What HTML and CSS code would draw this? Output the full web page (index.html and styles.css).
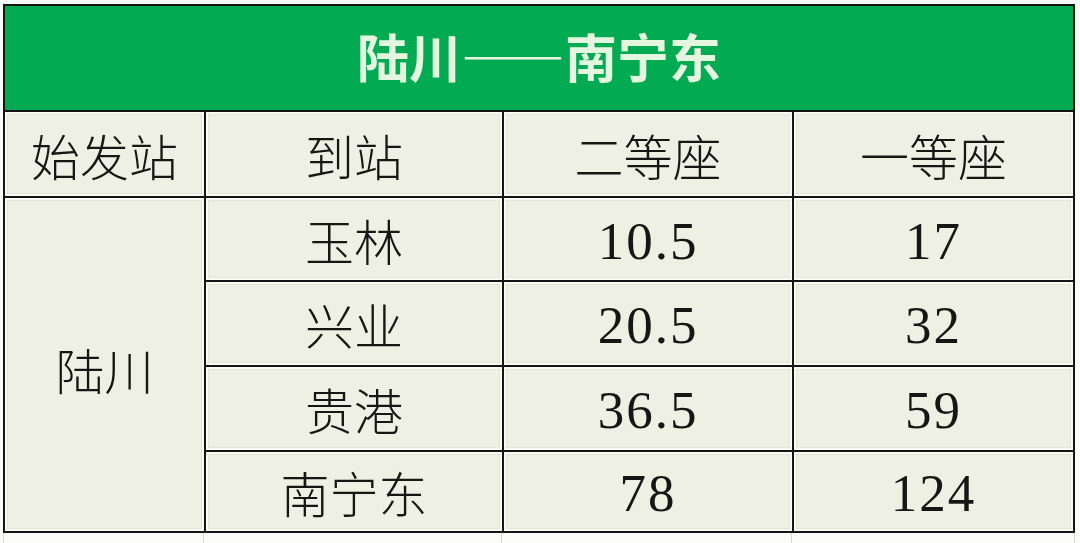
FILE: index.html
```html
<!DOCTYPE html>
<html lang="zh-CN">
<head>
<meta charset="utf-8">
<title>陆川——南宁东</title>
<link rel="stylesheet" href="styles.css">
</head>
<body>
<div class="page">
  <div class="fare">
    <div class="cell title">陆川——南宁东</div>
    <div class="cell">始发站</div>
    <div class="cell">到站</div>
    <div class="cell">二等座</div>
    <div class="cell">一等座</div>
    <div class="cell origin">陆川</div>
    <div class="cell">玉林</div>
    <div class="cell num">10.5</div>
    <div class="cell num">17</div>
    <div class="cell">兴业</div>
    <div class="cell num">20.5</div>
    <div class="cell num">32</div>
    <div class="cell">贵港</div>
    <div class="cell num">36.5</div>
    <div class="cell num">59</div>
    <div class="cell">南宁东</div>
    <div class="cell num">78</div>
    <div class="cell num">124</div>
  </div>
  <div class="below">
    <div class="ghost g1"></div>
    <div class="ghost g2"></div>
    <div class="ghost g3"></div>
    <div class="ghost g4"></div>
  </div>
</div>
</body>
</html>
```
FILE: styles.css
```css
html, body {
  margin: 0;
  padding: 0;
  background: #ffffff;
}
.page {
  width: 1080px;
  height: 543px;
  overflow: hidden;
  padding: 4px 0 0 3px;
  box-sizing: border-box;
  background: #fbfbf9;
}
.fare {
  display: grid;
  grid-template-columns: 199px 296px 288px 279px;
  grid-template-rows: 104px 84px 82px 83px 83px 79px;
  gap: 2px;
  padding: 2px;
  width: 1072px;
  box-sizing: border-box;
  background: #151515;
}
.cell {
  display: flex;
  align-items: center;
  justify-content: center;
  background: #eef0e3;
  box-shadow: inset 0 0 0 2px #f9faf3, inset 0 0 0 3px #e3e5d8;
  font-family: "Noto Sans CJK SC", "Noto Sans", sans-serif;
  font-size: 49px;
  font-weight: 300;
  color: #161616;
  line-height: 1;
}
.title {
  grid-column: 1 / span 4;
  background: #02ab52;
  box-shadow: none;
  color: #e4f6df;
  font-weight: 700;
  font-size: 52px;
  padding-bottom: 4px;
  box-sizing: border-box;
}
.origin {
  grid-row: 3 / span 4;
  padding-top: 8px;
  box-sizing: border-box;
}
.num {
  font-family: "Liberation Serif", "Times New Roman", serif;
  font-size: 53px;
  font-weight: 400;
  letter-spacing: 2px;
  padding-top: 4px;
  box-sizing: border-box;
}
.below {
  display: grid;
  grid-template-columns: 201px 298px 290px 283px;
  height: 12px;
}
.ghost {
  border-right: 1px solid #d8d8d4;
}
.g1 {
  border-left: 1px solid #d8d8d4;
}
```
